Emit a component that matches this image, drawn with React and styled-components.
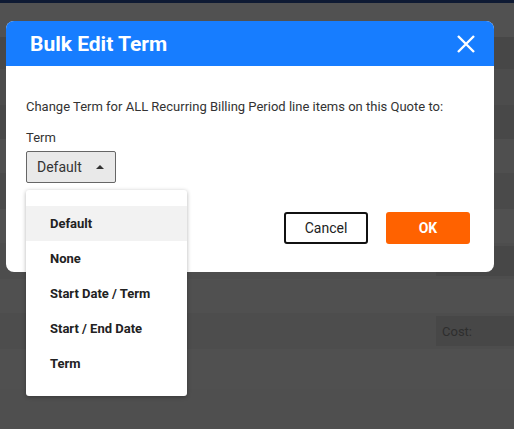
import React from 'react';
import styled, { createGlobalStyle } from 'styled-components';

const Global = createGlobalStyle`
  body { margin: 0; background: #4f4f4f; font-family: Roboto, "Liberation Sans", sans-serif; }
`;

const Page = styled.div`
  position: relative;
  width: 514px;
  height: 429px;
  overflow: hidden;
  border-top: 3px solid #0e1a33;
  box-sizing: border-box;
`;

const Row = styled.div`
  height: ${p => p.h}px;
  background: ${p => p.bg};
  display: flex;
  justify-content: flex-end;
  align-items: center;
`;

const CostBox = styled.div`
  width: 78px;
  height: 30px;
  background: #474747;
  color: #2e2e2e;
  font-size: 13px;
  display: flex;
  align-items: center;
  padding-left: 6px;
  box-sizing: border-box;
`;

const Modal = styled.div`
  position: absolute;
  left: 6px;
  top: 18px;
  width: 488px;
  height: 251px;
  background: #fff;
  border-radius: 8px;
  overflow: hidden;
  display: flex;
  flex-direction: column;
`;

const Header = styled.div`
  background: #177dff;
  height: 45px;
  display: flex;
  align-items: center;
  justify-content: space-between;
  padding: 0 18px 0 24px;
  color: #fff;
  font-size: 21px;
  font-weight: 700;
`;

const Body = styled.div`
  padding: 33px 20px 0 20px;
  color: #333;
  font-size: 13px;
`;

const Label = styled.div`
  margin-top: 16px;
  margin-bottom: 6px;
`;

const Select = styled.div`
  width: 90px;
  height: 32px;
  box-sizing: border-box;
  background: #e9e9e9;
  border: 1px solid #666;
  border-radius: 2px;
  display: flex;
  align-items: center;
  padding-left: 10px;
  gap: 14px;
  font-size: 14px;
`;

const Caret = styled.span`
  width: 0; height: 0;
  border-left: 4px solid transparent;
  border-right: 4px solid transparent;
  border-bottom: 4px solid #333;
`;

const Buttons = styled.div`
  display: flex;
  justify-content: flex-end;
  gap: 18px;
  padding: 29px 24px 0 0;
`;

const Button = styled.button`
  width: 84px;
  height: 32px;
  border-radius: 3px;
  font-family: inherit;
  font-size: 14px;
  font-weight: ${p => (p.primary ? 700 : 400)};
  color: ${p => (p.primary ? '#fff' : '#222')};
  background: ${p => (p.primary ? '#ff6200' : '#fff')};
  border: ${p => (p.primary ? 'none' : '2px solid #111')};
`;

const Menu = styled.div`
  position: absolute;
  left: 26px;
  top: 187px;
  width: 161px;
  height: 206px;
  background: #fff;
  border-radius: 3px;
  box-shadow: 0 1px 4px rgba(0,0,0,0.3);
  padding-top: 16px;
  box-sizing: border-box;
`;

const Item = styled.div`
  height: 35px;
  display: flex;
  align-items: center;
  padding-left: 24px;
  font-size: 13px;
  font-weight: 700;
  color: #222;
  background: ${p => (p.active ? '#f2f2f2' : 'transparent')};
`;

const rows = [
  [34, '#515151'], [32, '#474747'], [36, '#4c4c4c'], [34, '#484848'],
  [34, '#4f4f4f'], [36, '#4a4a4a'], [34, '#505050'], [36, '#4d4d4d', true],
  [34, '#505050'], [36, '#4d4d4d', true], [40, '#505050'],
];

export default function App() {
  return (
    <Page>
      <Global />
      {rows.map(([h, bg, cost], i) => (
        <Row key={i} h={h} bg={bg}>{cost && <CostBox>Cost:</CostBox>}</Row>
      ))}
      <Modal>
        <Header>
          <span>Bulk Edit Term</span>
          <svg width="20" height="20" viewBox="0 0 20 20" stroke="#fff" strokeWidth="2.4">
            <path d="M2 2L18 18M18 2L2 18" />
          </svg>
        </Header>
        <Body>
          Change Term for ALL Recurring Billing Period line items on this Quote to:
          <Label>Term</Label>
          <Select>Default <Caret /></Select>
        </Body>
        <Buttons>
          <Button>Cancel</Button>
          <Button primary>OK</Button>
        </Buttons>
      </Modal>
      <Menu>
        {['Default', 'None', 'Start Date / Term', 'Start / End Date', 'Term'].map((t, i) => (
          <Item key={t} active={i === 0}>{t}</Item>
        ))}
      </Menu>
    </Page>
  );
}
